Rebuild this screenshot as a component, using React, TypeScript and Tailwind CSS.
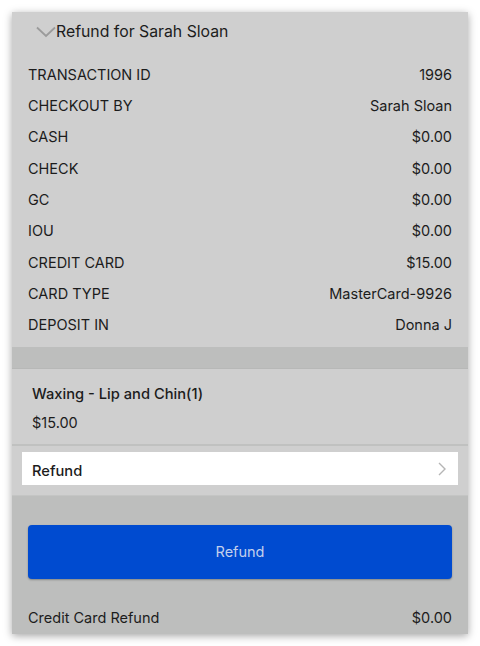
import React from 'react';

const rows: [string, string][] = [
  ['TRANSACTION ID', '1996'],
  ['CHECKOUT BY', 'Sarah Sloan'],
  ['CASH', '$0.00'],
  ['CHECK', '$0.00'],
  ['GC', '$0.00'],
  ['IOU', '$0.00'],
  ['CREDIT CARD', '$15.00'],
  ['CARD TYPE', 'MasterCard-9926'],
  ['DEPOSIT IN', 'Donna J'],
];

const App: React.FC = () => {
  return (
    <div className="w-[480px] h-[646px] bg-white p-3 font-['Inter',sans-serif] text-[#1c1c1c]">
      <div className="h-[622px] bg-[#cfcfcf] shadow-[0_2px_8px_rgba(0,0,0,0.35)] flex flex-col overflow-hidden">
        <div className="flex items-center h-[38px] pt-[2px] pl-6">
          <svg width="20" height="12" viewBox="0 0 20 12">
            <path d="M1 1.5 L10 10 L19 1.5" fill="none" stroke="#9b9b9b" strokeWidth="1.8" />
          </svg>
          <span className="text-[15.8px]">Refund for Sarah Sloan</span>
        </div>

        <div className="pt-[9px] pb-[6px] px-4">
          {rows.map(([k, v]) => (
            <div key={k} className="flex justify-between items-center h-[31.3px] text-[14.5px]">
              <span>{k}</span>
              <span>{v}</span>
            </div>
          ))}
        </div>

        <div className="h-[22px] bg-[#bdbebd] border-b border-[#b7b8b7]" />

        <div className="h-[77px] px-5 pt-[14px] border-b-2 border-[#c0c1c0]">
          <div className="text-[14.7px] font-medium">Waxing - Lip and Chin(1)</div>
          <div className="text-[14.5px] mt-[7px]">$15.00</div>
        </div>

        <div className="px-[10px] pt-[6px] pb-[10px] border-b border-[#c4c5c4]">
          <div className="h-[33px] bg-white flex items-center justify-between pl-[10px] pr-[12px] pt-[6px]">
            <span className="text-[14.7px] font-medium">Refund</span>
            <svg width="8" height="14" viewBox="0 0 8 14" className="-mt-[4px]">
              <path d="M1 1 L7 7 L1 13" fill="none" stroke="#b5b5b5" strokeWidth="1.4" />
            </svg>
          </div>
        </div>

        <div className="flex-1 bg-[#bdbebd] px-4 pt-[29px]">
          <button className="w-full h-[54px] rounded-[4px] bg-[#004bd0] text-[#c3d0ec] text-[14.5px] shadow-[0_1px_2px_rgba(0,0,0,0.3)]">
            Refund
          </button>
          <div className="flex justify-between items-center text-[14.5px] mt-[28px]">
            <span>Credit Card Refund</span>
            <span>$0.00</span>
          </div>
        </div>
      </div>
    </div>
  );
};

export default App;
